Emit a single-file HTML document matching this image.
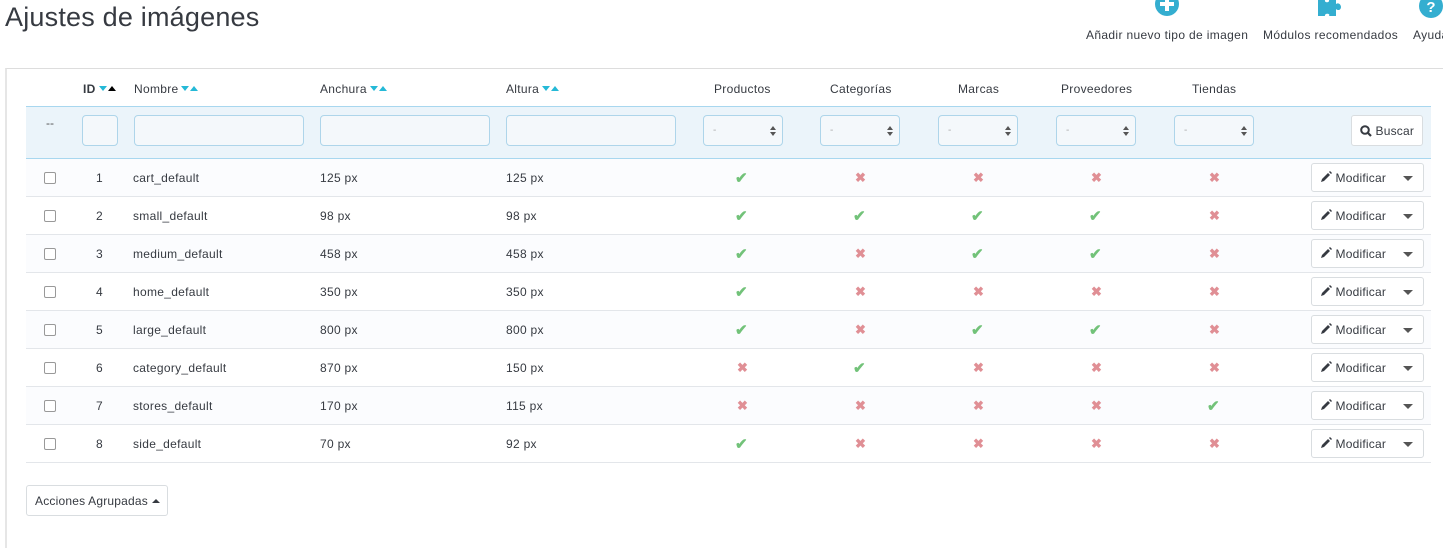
<!DOCTYPE html>
<html><head><meta charset="utf-8"><style>
*{box-sizing:border-box;margin:0;padding:0}
body{width:1443px;height:532px;overflow:hidden;background:#fff;font-family:"Liberation Sans",sans-serif;color:#555;font-size:12px;position:relative}
.a{position:absolute}
h1{position:absolute;left:5px;top:2px;font-size:27px;font-weight:normal;color:#363a41;letter-spacing:.2px}
.tb{position:absolute;top:28px;font-size:12px;color:#363a41;white-space:nowrap;letter-spacing:.35px}
.panel{position:absolute;left:5px;top:68px;width:1450px;height:480px;border-top:1px solid #ddd;border-left:2px solid #e6e6e6}
.th{position:absolute;top:82px;font-size:12px;color:#363a41;white-space:nowrap;letter-spacing:.3px}
.car{display:inline-block;width:0;height:0;border-left:4px solid transparent;border-right:4px solid transparent;margin-left:3px;vertical-align:2px}
.dn{border-top:5px solid #25b9d7}.up{border-bottom:5px solid #25b9d7}.upb{border-bottom:5px solid #000}
.filter{position:absolute;left:26px;top:106px;width:1405px;height:53px;background:#ebf4fa;border-top:1px solid #a8d7ef;border-bottom:1px solid #a8d7ef}
.inp{position:absolute;top:115px;height:31px;background:#f4f8fb;border:1px solid #aed5ea;border-radius:4px}
.sel{position:absolute;top:115px;width:80px;height:31px;background:#f4f8fb;border:1px solid #aed5ea;border-radius:4px;font-size:10px;color:#aaa;padding:9px 0 0 9px}
.sel:after{content:"";position:absolute;right:6px;top:10px;width:0;height:0;border-left:3px solid transparent;border-right:3px solid transparent;border-bottom:4px solid #555}
.sel:before{content:"";position:absolute;right:6px;top:16px;width:0;height:0;border-left:3px solid transparent;border-right:3px solid transparent;border-top:4px solid #555}
.row{position:absolute;left:26px;width:1405px;height:38px;border-bottom:1px solid #e3e6ea}
.row.o{background:#fbfcfe}
.c{position:absolute;top:12px;font-size:12px;color:#363a41;white-space:nowrap;letter-spacing:.3px}
.cb{position:absolute;left:18px;top:13px;width:12px;height:12px;border:1px solid #999;border-radius:2px;background:#fff}
.ok{position:absolute;top:10px;color:#72c279;font-size:15px;font-weight:bold}
.no{position:absolute;top:11px;color:#e08f95;font-size:13px;font-weight:bold}
.btn{position:absolute;left:1285px;top:4px;width:113px;height:29px;border:1px solid #d9dde0;border-radius:3px;background:#fff;font-size:12px;color:#363a41;padding:7px 0 0 8px;letter-spacing:.2px}
.btn .cr{position:absolute;right:10px;top:12px;border-left:5px solid transparent;border-right:5px solid transparent;border-top:5px solid #555}
</style></head><body>
<h1>Ajustes de imágenes</h1>
<svg class="a" style="left:1155px;top:-8px" width="24" height="24"><circle cx="12" cy="12" r="12" fill="#34aed0"/><rect x="10" y="5" width="4" height="14" fill="#fff"/><rect x="5" y="10" width="14" height="4" fill="#fff"/></svg>
<svg class="a" style="left:1318px;top:0" width="26" height="17"><path d="M0 0H7C6 3 12 3 11 0H18V4C21 2 23 5 23 7C23 10 20 11 18 9V16H11C13 13 6 13 7 16H0Z" fill="#34aed0"/></svg>
<svg class="a" style="left:1419px;top:-6px" width="24" height="24"><circle cx="12" cy="12" r="12" fill="#34aed0"/><text x="12" y="18" text-anchor="middle" font-family="Liberation Sans" font-weight="bold" font-size="15" fill="#fff">?</text></svg>
<div class="tb" style="left:1086px">Añadir nuevo tipo de imagen</div>
<div class="tb" style="left:1263px">Módulos recomendados</div>
<div class="tb" style="left:1413px">Ayuda</div>
<div class="panel"></div>
<div class="th" style="left:83px;font-weight:bold">ID<span class="car dn"></span><span class="car upb" style="margin-left:1px"></span></div>
<div class="th" style="left:134px">Nombre<span class="car dn"></span><span class="car up" style="margin-left:1px"></span></div>
<div class="th" style="left:320px">Anchura<span class="car dn"></span><span class="car up" style="margin-left:1px"></span></div>
<div class="th" style="left:506px">Altura<span class="car dn"></span><span class="car up" style="margin-left:1px"></span></div>
<div class="th" style="left:714px">Productos</div>
<div class="th" style="left:830px">Categorías</div>
<div class="th" style="left:958px">Marcas</div>
<div class="th" style="left:1061px">Proveedores</div>
<div class="th" style="left:1192px">Tiendas</div>
<div class="filter"></div>
<div class="a" style="left:46px;top:116px;color:#555">--</div>
<div class="inp" style="left:82px;width:36px"></div>
<div class="inp" style="left:134px;width:170px"></div>
<div class="inp" style="left:320px;width:170px"></div>
<div class="inp" style="left:506px;width:170px"></div>
<div class="sel" style="left:703px">-</div>
<div class="sel" style="left:820px">-</div>
<div class="sel" style="left:938px">-</div>
<div class="sel" style="left:1056px">-</div>
<div class="sel" style="left:1174px">-</div>
<div class="a" style="left:1351px;top:115px;width:72px;height:31px;border:1px solid #d9dde0;border-radius:3px;background:#fff;font-size:12px;color:#363a41;padding:8px 0 0 8px;letter-spacing:.2px"><svg width="12" height="12" style="vertical-align:-2px"><circle cx="5" cy="5" r="3.8" fill="none" stroke="#363a41" stroke-width="2"/><path d="M8 8L11 11" stroke="#363a41" stroke-width="2.2"/></svg> Buscar</div>
<div id="rows"></div>
<div class="a" style="left:26px;top:485px;width:142px;height:31px;border:1px solid #d9dde0;border-radius:3px;background:#fff;font-size:12px;color:#363a41;padding:8px 0 0 8px;letter-spacing:.2px">Acciones Agrupadas <span style="display:inline-block;border-left:4px solid transparent;border-right:4px solid transparent;border-bottom:4px solid #363a41;vertical-align:2px"></span></div>
<script>
var d=[[1,"cart_default",125,125,"10000"],[2,"small_default",98,98,"11110"],[3,"medium_default",458,458,"10110"],[4,"home_default",350,350,"10000"],[5,"large_default",800,800,"10110"],[6,"category_default",870,150,"01000"],[7,"stores_default",170,115,"00001"],[8,"side_default",70,92,"10000"]];
var cx=[742,860,978,1096,1214],h="";
d.forEach(function(r,i){
h+='<div class="row'+(i%2==0?' o':'')+'" style="top:'+(159+i*38)+'px"><div class="cb"></div><div class="c" style="left:70px">'+r[0]+'</div><div class="c" style="left:107px">'+r[1]+'</div><div class="c" style="left:294px">'+r[2]+' px</div><div class="c" style="left:480px">'+r[3]+' px</div>';
for(var k=0;k<5;k++){h+=r[4][k]=="1"?'<div class="ok" style="left:'+(cx[k]-26-7)+'px">✔</div>':'<div class="no" style="left:'+(cx[k]-26-5)+'px">✖</div>';}
h+='<div class="btn"><svg width="12" height="12" style="vertical-align:-1px"><path d="M1 11L2 8L8 2L10 4L4 10Z" fill="#363a41"/><path d="M9 1L10 0L12 2L11 3Z" fill="#363a41"/></svg> Modificar<span class="cr a"></span></div></div>';});
document.getElementById("rows").innerHTML=h;
</script>
</body></html>
